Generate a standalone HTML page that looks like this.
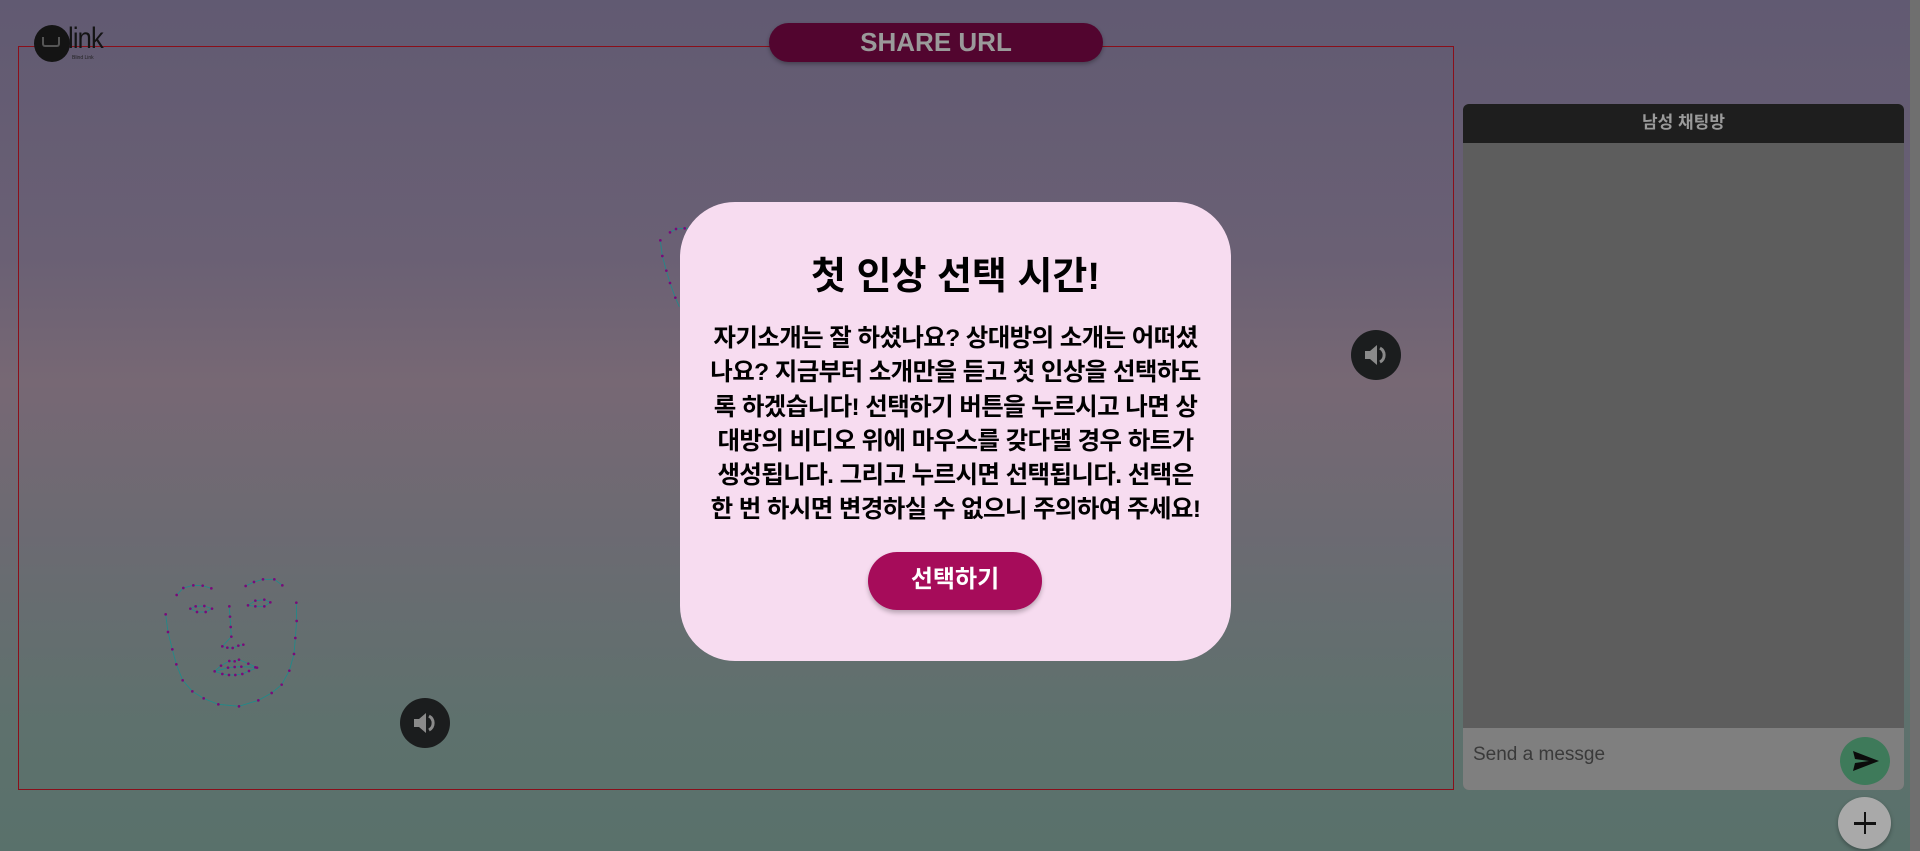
<!DOCTYPE html>
<html><head><meta charset="utf-8"><style>
*{margin:0;padding:0;box-sizing:border-box}
body{width:1920px;height:851px;overflow:hidden;position:relative;font-family:"Liberation Sans","Noto Sans CJK KR",sans-serif;
background:linear-gradient(180deg,#615a72 0%,#6a6074 30%,#776874 45%,#6c6a72 62%,#5e716d 85%,#59716b 100%)}
.abs{position:absolute}
</style></head><body>
<div class="abs" style="left:1910px;top:0;width:10px;height:851px;background:#6f6f6f"></div>
<div class="abs" style="left:18px;top:46px;width:1436px;height:744px;border:1px solid #8a0f1a"></div>
<div class="abs" style="left:34px;top:25px;width:36px;height:37px;border-radius:50%;background:#141414"></div>
<div class="abs" style="left:42px;top:37px;width:18px;height:10px;border:2px solid #555;border-top:none;border-radius:0 0 3px 3px"></div>
<div class="abs" style="left:68px;top:22px;font-size:30px;color:#141414;letter-spacing:-1px;transform:scaleX(0.85);transform-origin:left">link</div>
<div class="abs" style="left:72px;top:55px;font-size:5px;color:#222">Blind Link</div>
<div class="abs" style="left:769px;top:23px;width:334px;height:39px;border-radius:20px;background:#52052f;box-shadow:0 2px 4px rgba(0,0,0,.3);color:#9a9a9a;font-size:26px;font-weight:bold;text-align:center;line-height:39px">SHARE URL</div>

<svg class="abs" style="left:150px;top:560px" width="320" height="200" viewBox="0 0 960 600">
<g fill="none" stroke="#1f8a8a" stroke-width="2.5">
<polyline points="47,163 54,216 67,268 79,313 98,361 127,394 161,415 205,433 267,439 325,421 365,399 395,374 418,332 432,282 436,234 440,183 439,128"/>
<polyline points="80,105 100,84 130,76 158,77 184,85"/>
<polyline points="287,78 312,66 339,58 373,58 397,76"/>
<polygon points="121,146 137,139 163,138 186,146 167,156 141,156"/>
<polygon points="294,136 316,122 343,119 361,127 343,139 316,139"/>
<polyline points="238,139 240,170 242,201 244,230 217,259 232,263 248,264 265,257 280,254"/>
<polygon points="194,334 213,317 238,303 254,304 267,299 295,311 321,323 297,333 277,342 256,345 237,345 217,342"/>
<polyline points="196,334 234,323 254,321 274,320 316,322"/>
</g>
<g fill="#7a0a7a">
<circle cx="47" cy="163" r="4"/><circle cx="54" cy="216" r="4"/><circle cx="67" cy="268" r="4"/><circle cx="79" cy="313" r="4"/><circle cx="98" cy="361" r="4"/><circle cx="127" cy="394" r="4"/><circle cx="161" cy="415" r="4"/><circle cx="205" cy="433" r="4"/><circle cx="267" cy="439" r="4"/><circle cx="325" cy="421" r="4"/><circle cx="365" cy="399" r="4"/><circle cx="395" cy="374" r="4"/><circle cx="418" cy="332" r="4"/><circle cx="432" cy="282" r="4"/><circle cx="436" cy="234" r="4"/><circle cx="440" cy="183" r="4"/><circle cx="439" cy="128" r="4"/>
<circle cx="80" cy="105" r="4"/><circle cx="100" cy="84" r="4"/><circle cx="130" cy="76" r="4"/><circle cx="158" cy="77" r="4"/><circle cx="184" cy="85" r="4"/>
<circle cx="287" cy="78" r="4"/><circle cx="312" cy="66" r="4"/><circle cx="339" cy="58" r="4"/><circle cx="373" cy="58" r="4"/><circle cx="397" cy="76" r="4"/>
<circle cx="121" cy="146" r="4"/><circle cx="137" cy="139" r="4"/><circle cx="163" cy="138" r="4"/><circle cx="186" cy="146" r="4"/><circle cx="167" cy="156" r="4"/><circle cx="141" cy="156" r="4"/>
<circle cx="294" cy="136" r="4"/><circle cx="316" cy="122" r="4"/><circle cx="343" cy="119" r="4"/><circle cx="361" cy="127" r="4"/><circle cx="343" cy="139" r="4"/><circle cx="316" cy="139" r="4"/>
<circle cx="238" cy="139" r="4"/><circle cx="240" cy="170" r="4"/><circle cx="242" cy="201" r="4"/><circle cx="244" cy="230" r="4"/><circle cx="217" cy="259" r="4"/><circle cx="232" cy="263" r="4"/><circle cx="248" cy="264" r="4"/><circle cx="265" cy="257" r="4"/><circle cx="280" cy="254" r="4"/>
<circle cx="194" cy="334" r="4"/><circle cx="213" cy="317" r="4"/><circle cx="238" cy="303" r="4"/><circle cx="254" cy="304" r="4"/><circle cx="267" cy="299" r="4"/><circle cx="295" cy="311" r="4"/><circle cx="321" cy="323" r="4"/><circle cx="297" cy="333" r="4"/><circle cx="277" cy="342" r="4"/><circle cx="256" cy="345" r="4"/><circle cx="237" cy="345" r="4"/><circle cx="217" cy="342" r="4"/><circle cx="234" cy="323" r="4"/><circle cx="254" cy="321" r="4"/><circle cx="274" cy="320" r="4"/><circle cx="316" cy="322" r="4"/>
</g></svg>

<svg class="abs" style="left:640px;top:210px" width="60" height="100" viewBox="0 0 180 300">
<polyline points="61,91 67,138 79,182 90,219 106,263 118,290" fill="none" stroke="#1f8a8a" stroke-width="2.5"/>
<polyline points="90,67 108,57 134,55 160,55" fill="none" stroke="#1f8a8a" stroke-width="2.5"/>
<g fill="#7a0a7a"><circle cx="61" cy="91" r="4"/><circle cx="67" cy="138" r="4"/><circle cx="79" cy="182" r="4"/><circle cx="90" cy="219" r="4"/><circle cx="106" cy="263" r="4"/><circle cx="90" cy="67" r="4"/><circle cx="108" cy="57" r="4"/><circle cx="134" cy="55" r="4"/></g>
</svg>

<svg class="abs" style="left:400px;top:698px" width="50" height="50" viewBox="0 0 50 50"><circle cx="25" cy="25" r="25" fill="#1b1d1e"/><path d="M14 21h5l7-6v20l-7-6h-5z" fill="#8a8a8a"/><path d="M29 18a8 8 0 0 1 0 14" stroke="#8a8a8a" stroke-width="3" fill="none"/></svg>
<svg class="abs" style="left:1351px;top:330px" width="50" height="50" viewBox="0 0 50 50"><circle cx="25" cy="25" r="25" fill="#1b1d1e"/><path d="M14 21h5l7-6v20l-7-6h-5z" fill="#8a8a8a"/><path d="M29 18a8 8 0 0 1 0 14" stroke="#8a8a8a" stroke-width="3" fill="none"/></svg>

<div class="abs" style="left:1463px;top:104px;width:441px;height:686px;border-radius:6px;overflow:hidden;background:#5d5d5d">
<div style="height:39px;background:#1e1e1e;color:#9a9a9a;font-weight:bold;font-size:17px;text-align:center;line-height:37px">남성 채팅방</div>
<div class="abs" style="left:0;top:624px;width:441px;height:62px;background:#7f7f7f"></div>
<div class="abs" style="left:10px;top:640px;font-size:19px;color:#3a3a3a">Send a messge</div>
<svg class="abs" style="left:377px;top:632px" width="50" height="50" viewBox="0 0 50 50"><ellipse cx="25" cy="25" rx="25" ry="24" fill="#3e7a5a"/><path d="M13 15l26 10-26 10 2-8 14-2-14-2z" fill="#0b0b0b"/></svg>
</div>
<div class="abs" style="left:1838px;top:797px;width:53px;height:52px;border-radius:50%;background:#a9a9a9;box-shadow:0 2px 4px rgba(0,0,0,.3)"></div>
<div class="abs" style="left:1854px;top:822px;width:22px;height:2.5px;background:#111"></div>
<div class="abs" style="left:1863.5px;top:812px;width:2.5px;height:22px;background:#111"></div>

<div class="abs" style="left:680px;top:202px;width:551px;height:459px;border-radius:55px;background:#f7dcf0;text-align:center;color:#000">
<div style="position:absolute;left:0;right:0;top:53px;font-size:38px;font-weight:bold;line-height:44px">첫 인상 선택 시간!</div>
<div style="position:absolute;left:0;right:0;top:120px;font-size:24.5px;font-weight:bold;line-height:34.3px;letter-spacing:-0.6px;white-space:nowrap">자기소개는 잘 하셨나요? 상대방의 소개는 어떠셨<br>나요? 지금부터 소개만을 듣고 첫 인상을 선택하도<br>록 하겠습니다! 선택하기 버튼을 누르시고 나면 상<br>대방의 비디오 위에 마우스를 갖다댈 경우 하트가<br>생성됩니다. 그리고 누르시면 선택됩니다. 선택은<br>한 번 하시면 변경하실 수 없으니 주의하여 주세요!</div>
<div style="position:absolute;left:188px;top:350px;width:174px;height:58px;border-radius:29px;background:#a60c5a;color:#fff;font-size:24px;font-weight:bold;line-height:56px;box-shadow:0 3px 5px rgba(0,0,0,.25)">선택하기</div>
</div>
</body></html>
